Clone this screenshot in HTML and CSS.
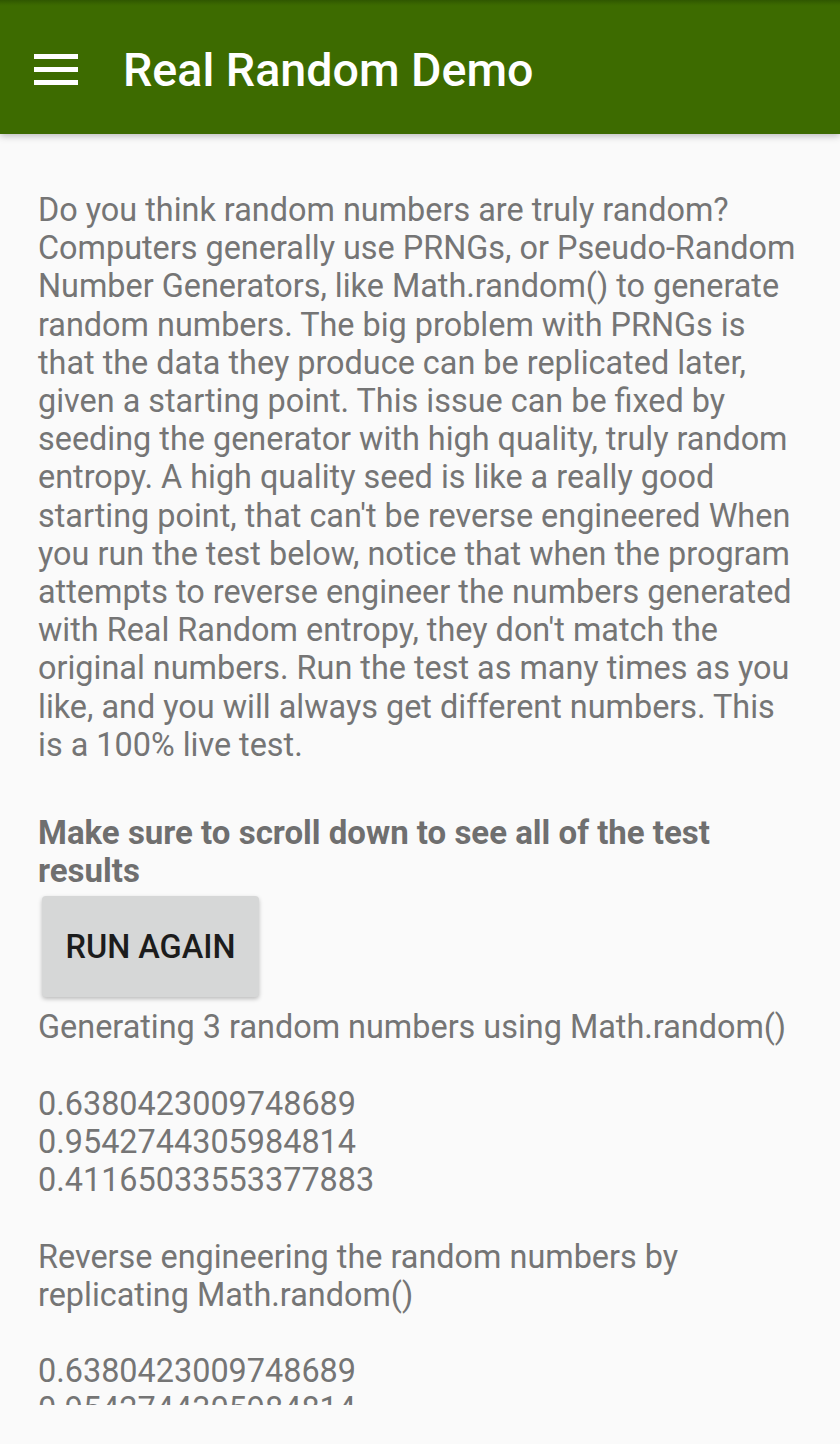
FILE: index.html
```html
<!DOCTYPE html>
<html lang="en">
<head>
<meta charset="utf-8">
<title>Real Random Demo</title>
<link rel="stylesheet" href="styles.css">
</head>
<body>
<div class="app">
  <header class="toolbar">
    <button class="menu" aria-label="Menu">
      <svg width="44" height="31" viewBox="0 0 44 31"><rect x="0" y="0" width="44" height="5" fill="#fff"/><rect x="0" y="13" width="44" height="5" fill="#fff"/><rect x="0" y="26" width="44" height="5" fill="#fff"/></svg>
    </button>
    <h1 class="title">Real Random Demo</h1>
  </header>
  <main class="content">
    <p class="intro">Do you think random numbers are truly random? Computers generally use PRNGs, or Pseudo-Random Number Generators, like Math.random() to generate random numbers. The big problem with PRNGs is that the data they produce can be replicated later, given a starting point. This issue can be fixed by seeding the generator with high quality, truly random entropy. A high quality seed is like a really good starting point, that can't be reverse engineered When you run the test below, notice that when the program attempts to reverse engineer the numbers generated with Real Random entropy, they don't match the original numbers. Run the test as many times as you like, and you will always get different numbers. This is a 100% live test.</p>
    <p class="note">Make sure to scroll down to see all of the test results</p>
    <button class="run">RUN AGAIN</button>
    <div class="output">
      <p>Generating 3 random numbers using Math.random()</p>
      <p>0.6380423009748689<br>0.9542744305984814<br>0.41165033553377883</p>
      <p>Reverse engineering the random numbers by replicating Math.random()</p>
      <p>0.6380423009748689<br>0.9542744305984814<br>0.41165033553377883</p>
    </div>
  </main>
</div>
</body>
</html>
```
FILE: styles.css
```css
html, body {
  margin: 0;
  padding: 0;
  background: #fafafa;
}
body {
  font-family: Roboto, "Noto Sans", sans-serif;
}
.app {
  width: 840px;
  height: 1444px;
  display: flex;
  flex-direction: column;
  overflow: hidden;
}
.toolbar {
  position: relative;
  z-index: 2;
  flex: 0 0 134px;
  height: 134px;
  box-sizing: border-box;
  background: linear-gradient(#2f5700 0, #3a6600 4px, #3d6b00 6px, #3d6b00 100%);
  box-shadow: 0 2px 7px rgba(0,0,0,0.26);
  display: flex;
  align-items: center;
  padding-left: 34px;
}
.menu {
  border: 0;
  background: none;
  padding: 0;
  margin: 4px 0 0 0;
  width: 44px;
  height: 31px;
  display: flex;
}
.title {
  margin: 6px 0 0 45px;
  color: #fff;
  font-weight: 500;
  font-size: 46.6px;
  line-height: 1;
  letter-spacing: 0;
}
.content {
  height: 1271px;
  overflow: hidden;
  box-sizing: border-box;
  padding: 57px 36px 0 38px;
  color: #757575;
  font-size: 32.4px;
  line-height: 38.2px;
}
.content p {
  margin: 0;
}
.content .note {
  margin-top: 50px;
  font-weight: 700;
  font-size: 33px;
  line-height: 38.2px;
  color: #6f6f6f;
}
.run {
  display: block;
  margin: 6px 0 11px 4px;
  width: 217px;
  height: 101px;
  border: 0;
  border-radius: 4px;
  background: #d6d7d7;
  box-shadow: 0 2px 4px rgba(0,0,0,0.25);
  font-family: Roboto, sans-serif;
  font-weight: 500;
  font-size: 32.5px;
  color: #1c1c1c;
  padding: 0;
}
.output p + p {
  margin-top: 38.2px;
}
```
